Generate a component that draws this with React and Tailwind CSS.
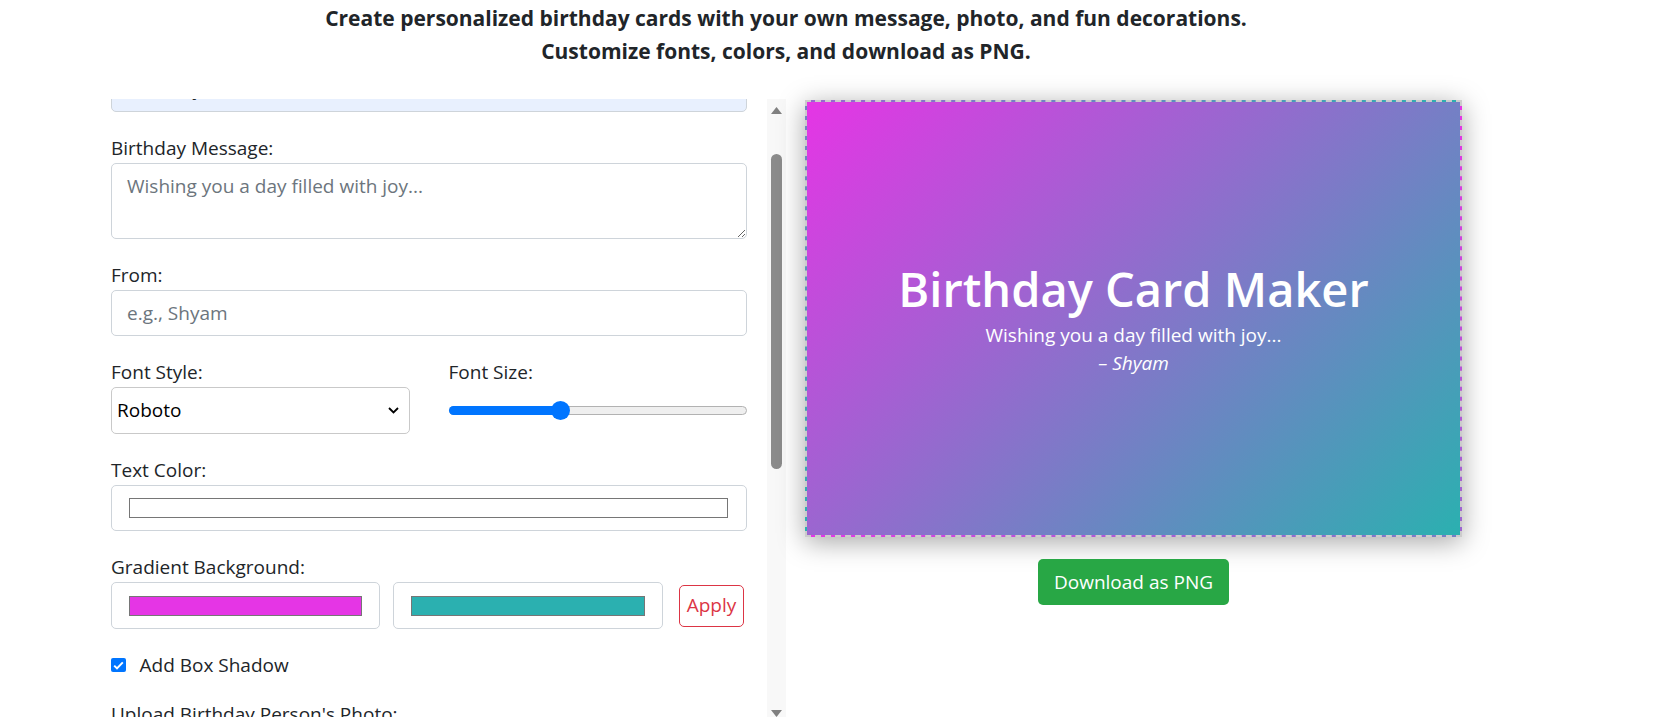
import React from "react";

function Label({ children, className = "" }) {
  return <label className={"block leading-[30px] text-[#212529] " + className}>{children}</label>;
}

function Scrollbar() {
  return (
    <div className="flex h-[618px] w-[19px] flex-col items-center bg-[#f8f8f8]">
      <svg className="mt-[8px]" width="11" height="7" viewBox="0 0 11 7">
        <path d="M5.5 0 L11 7 L0 7 Z" fill="#808080" />
      </svg>
      <div className="mt-[40px] h-[315px] w-[11px] rounded-full bg-[#8b8b8b]" />
      <div className="flex-1" />
      <svg width="11" height="7" viewBox="0 0 11 7">
        <path d="M0 0 L11 0 L5.5 7 Z" fill="#808080" />
      </svg>
    </div>
  );
}

export default function App() {
  return (
    <div className="h-[717px] w-[1655px] overflow-hidden bg-white font-['Open_Sans',sans-serif] text-[19px] text-[#212529]">
      <div className="ml-[91px] w-[1390px]">
        <header className="pt-[2px] text-center text-[21px] font-bold leading-[33px] text-[#212529]">
          <p>Create personalized birthday cards with your own message, photo, and fun decorations.</p>
          <p>Customize fonts, colors, and download as PNG.</p>
        </header>

        <div className="mt-[31px] grid grid-cols-[695px_695px]">
          {/* Left: form panel */}
          <div className="flex h-[618px]">
            <div className="w-[676px] overflow-hidden px-[20px]">
              <div className="-mt-[34px]">
                <input
                  readOnly
                  value="Birthday Card Maker"
                  className="block h-[47px] w-full rounded-[5px] border border-[#ced4da] bg-[#e8f0fe] px-[15px] text-[19px] text-[#212529] outline-none"
                />

                <Label className="mt-[21px]">Birthday Message:</Label>
                <textarea
                  placeholder="Wishing you a day filled with joy..."
                  className="block h-[76px] w-full resize-y rounded-[5px] border border-[#ced4da] bg-white px-[15px] py-[7px] text-[19px] leading-[30px] text-[#212529] outline-none placeholder:text-[#6c757d]"
                />

                <Label className="mt-[21px]">From:</Label>
                <input
                  placeholder="e.g., Shyam"
                  className="block h-[46px] w-full rounded-[5px] border border-[#ced4da] bg-white px-[15px] text-[19px] text-[#212529] outline-none placeholder:text-[#6c757d]"
                />

                <div className="mt-[21px] grid grid-cols-2 gap-x-[39px]">
                  <div>
                    <Label>Font Style:</Label>
                    <div className="flex h-[47px] items-center justify-between rounded-[5px] border border-[#c9c9c9] bg-white pl-[5px] pr-[10px] text-[19px] text-black">
                      <span>Roboto</span>
                      <svg width="11" height="7" viewBox="0 0 11 7">
                        <path d="M1 1 L5.5 5.5 L10 1" fill="none" stroke="#000" strokeWidth="1.8" />
                      </svg>
                    </div>
                  </div>
                  <div>
                    <Label>Font Size:</Label>
                    <div className="flex h-[47px] items-center">
                      <div className="relative h-[9px] w-full rounded-full border border-[#b2b2b2] bg-[#efefef]">
                        <div className="-my-px -ml-px h-[9px] w-[112px] rounded-full bg-[#0075ff]" />
                        <div className="absolute left-[101px] top-[-6px] h-[19px] w-[19px] rounded-full bg-[#0075ff]" />
                      </div>
                    </div>
                  </div>
                </div>

                <Label className="mt-[21px]">Text Color:</Label>
                <div className="flex h-[46px] items-center rounded-[5px] border border-[#ced4da] bg-white pl-[17px] pr-[18px]">
                  <div className="h-[20px] w-full border border-[#767676] bg-white" />
                </div>

                <Label className="mt-[21px]">Gradient Background:</Label>
                <div className="flex items-center">
                  <div className="flex h-[47px] w-[269px] items-center rounded-[5px] border border-[#ced4da] bg-white px-[17px]">
                    <div className="h-[20px] w-full border border-[#767676] bg-[#e535e5]" />
                  </div>
                  <div className="ml-[13px] flex h-[47px] w-[270px] items-center rounded-[5px] border border-[#ced4da] bg-white px-[17px]">
                    <div className="h-[20px] w-full border border-[#767676] bg-[#2bb0b0]" />
                  </div>
                  <button className="ml-[16px] h-[42px] w-[65px] rounded-[5px] border border-[#dc3545] bg-white text-[19px] text-[#dc3545]">
                    Apply
                  </button>
                </div>

                <div className="mt-[21px] flex h-[30px] items-center gap-[14px]">
                  <div className="flex h-[14.5px] w-[14.5px] items-center justify-center rounded-[2px] bg-[#0075ff]">
                    <svg width="11" height="9" viewBox="0 0 11 9">
                      <path d="M1.2 4.6 L4 7.4 L9.8 1.4" fill="none" stroke="#fff" strokeWidth="2" />
                    </svg>
                  </div>
                  <span className="leading-[30px]">Add Box Shadow</span>
                </div>

                <Label className="mt-[19px]">Upload Birthday Person's Photo:</Label>
                <div className="h-[47px] rounded-[5px] border border-[#ced4da] bg-white" />
              </div>
            </div>
            <Scrollbar />
          </div>

          {/* Right: preview */}
          <div className="flex flex-col items-center pt-px">
            <div className="flex h-[437px] w-[657px] flex-col items-center justify-center border-2 border-dashed border-[#cccccc] bg-[linear-gradient(135deg,#e535e5,#2bb0b0)] text-center text-white shadow-[0_5px_25px_rgba(0,0,0,0.35)]">
              <h1 className="text-[47px] font-semibold leading-[56px]">Birthday Card Maker</h1>
              <p className="mt-[4px] text-[19px] leading-[28px]">Wishing you a day filled with joy...</p>
              <p className="text-[19px] italic leading-[28px]">– Shyam</p>
            </div>
            <button className="mt-[22px] h-[46px] w-[191px] rounded-[5px] bg-[#28a745] text-[19px] text-white">
              Download as PNG
            </button>
          </div>
        </div>
      </div>
    </div>
  );
}
